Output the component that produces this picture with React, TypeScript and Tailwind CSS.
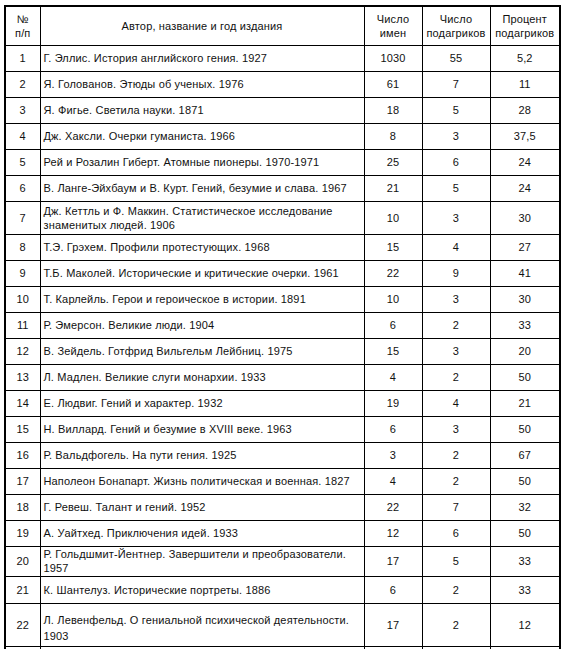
const rows: [string, string, string, string, string, number][] = [
  ["1", "Г. Эллис. История английского гения. 1927", "1030", "55", "5,2", 26],
  ["2", "Я. Голованов. Этюды об ученых. 1976", "61", "7", "11", 26],
  ["3", "Я. Фигье. Светила науки. 1871", "18", "5", "28", 26],
  ["4", "Дж. Хаксли. Очерки гуманиста. 1966", "8", "3", "37,5", 26],
  ["5", "Рей и Розалин Гиберт. Атомные пионеры. 1970-1971", "25", "6", "24", 26],
  ["6", "В. Ланге-Эйхбаум и В. Курт. Гений, безумие и слава. 1967", "21", "5", "24", 26],
  ["7", "Дж. Кеттль и Ф. Маккин. Статистическое исследование\nзнаменитых людей. 1906", "10", "3", "30", 33],
  ["8", "Т.Э. Грэхем. Профили протестующих. 1968", "15", "4", "27", 26],
  ["9", "Т.Б. Маколей. Исторические и критические очерки. 1961", "22", "9", "41", 26],
  ["10", "Т. Карлейль. Герои и героическое в истории. 1891", "10", "3", "30", 26],
  ["11", "Р. Эмерсон. Великие люди. 1904", "6", "2", "33", 26],
  ["12", "В. Зейдель. Готфрид Вильгельм Лейбниц. 1975", "15", "3", "20", 26],
  ["13", "Л. Мадлен. Великие слуги монархии. 1933", "4", "2", "50", 26],
  ["14", "Е. Людвиг. Гений и характер. 1932", "19", "4", "21", 26],
  ["15", "Н. Виллард. Гений и безумие в XVIII веке. 1963", "6", "3", "50", 26],
  ["16", "Р. Вальдфогель. На пути гения. 1925", "3", "2", "67", 26],
  ["17", "Наполеон Бонапарт. Жизнь политическая и военная. 1827", "4", "2", "50", 26],
  ["18", "Г. Ревеш. Талант и гений. 1952", "22", "7", "32", 26],
  ["19", "А. Уайтхед. Приключения идей. 1933", "12", "6", "50", 26],
  ["20", "Р. Гольдшмит-Йентнер. Завершители и преобразователи.\n1957", "17", "5", "33", 30],
  ["21", "К. Шантелуз. Исторические портреты. 1886", "6", "2", "33", 27],
  ["22", "Л. Левенфельд. О гениальной психической деятельности.\n1903", "17", "2", "12", 43],
];

const cell = "border border-black px-[3px] py-0 align-middle";

export default function App() {
  return (
    <div className="bg-white w-[565px] h-[649px] overflow-hidden pt-[5px] pl-[4px] font-['Liberation_Sans',Arial,sans-serif] text-[11px] leading-[14px] tracking-[0.15px] text-[#111]">
      <table className="table-fixed border-collapse border-2 border-black w-[555px]">
        <colgroup>
          <col className="w-[35px]" />
          <col className="w-[324px]" />
          <col className="w-[58px]" />
          <col className="w-[68px]" />
          <col className="w-[70px]" />
        </colgroup>
        <thead>
          <tr className="h-[39px]">
            <th className={`${cell} font-normal text-center`}>№<br />п/п</th>
            <th className={`${cell} font-normal text-center`}>Автор, название и год издания</th>
            <th className={`${cell} font-normal text-center`}>Число<br />имен</th>
            <th className={`${cell} font-normal text-center`}>Число<br />подагриков</th>
            <th className={`${cell} font-normal text-center`}>Процент<br />подагриков</th>
          </tr>
        </thead>
        <tbody>
          {rows.map(([n, title, names, gout, pct, h]) => (
            <tr key={n} style={{ height: h }}>
              <td className={`${cell} text-center`}>{n}</td>
              <td className={`${cell} text-left whitespace-pre-line ${n === "22" ? "pt-[6px] leading-[16px]" : ""}`}>{title}</td>
              <td className={`${cell} text-center`}>{names}</td>
              <td className={`${cell} text-center`}>{gout}</td>
              <td className={`${cell} text-center`}>{pct}</td>
            </tr>
          ))}
          <tr className="h-[26px]">
            <td className={cell}></td>
            <td className={cell}></td>
            <td className={cell}></td>
            <td className={cell}></td>
            <td className={cell}></td>
          </tr>
        </tbody>
      </table>
    </div>
  );
}
